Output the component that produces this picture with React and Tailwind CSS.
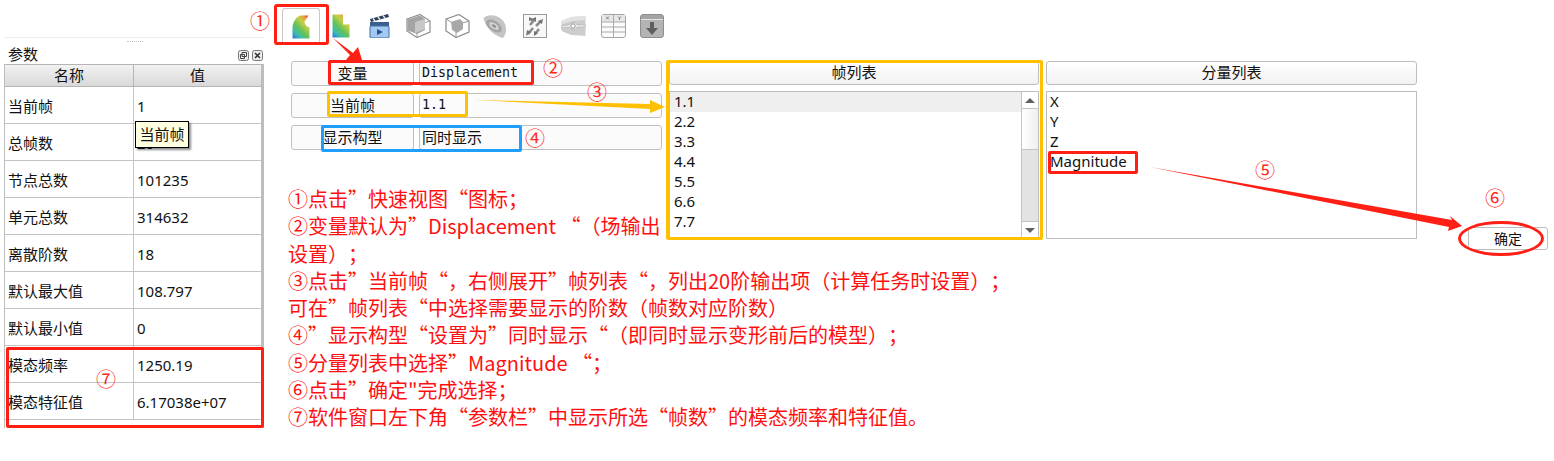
import React from 'react';

const cjk = "font-['Noto_Sans','Noto_Sans_CJK_SC',sans-serif]";

const params = [
    ['当前帧', '1'],
    ['总帧数', '20'],
    ['节点总数', '101235'],
    ['单元总数', '314632'],
    ['离散阶数', '18'],
    ['默认最大值', '108.797'],
    ['默认最小值', '0'],
    ['模态频率', '1250.19'],
    ['模态特征值', '6.17038e+07'],
];

const frames = ['1.1', '2.2', '3.3', '4.4', '5.5', '6.6', '7.7', '8.8'];
const components = ['X', 'Y', 'Z', 'Magnitude'];

const notes = [
    '①点击”快速视图“图标；',
    '②变量默认为”Displacement “（场输出',
    '设置）；',
    '③点击”当前帧“，右侧展开”帧列表“，列出20阶输出项（计算任务时设置）；',
    '可在”帧列表“中选择需要显示的阶数（帧数对应阶数）',
    '④”显示构型“设置为”同时显示“（即同时显示变形前后的模型）；',
    '⑤分量列表中选择”Magnitude “；',
    '⑥点击”确定"完成选择；',
    '⑦软件窗口左下角“参数栏”中显示所选“帧数”的模态频率和特征值。',
];

function Rainbow({ id }) {
    return (
        <defs>
            <linearGradient id={id} x1="0.05" y1="1" x2="0.8" y2="0">
                <stop offset="0" stopColor="#2a78d8" />
                <stop offset="0.22" stopColor="#3cbcae" />
                <stop offset="0.45" stopColor="#63c258" />
                <stop offset="0.72" stopColor="#c6cf46" />
                <stop offset="0.9" stopColor="#e8a040" />
                <stop offset="1" stopColor="#e4573a" />
            </linearGradient>
        </defs>
    );
}

function IconContourA() {
    return (
        <svg width="18" height="24" viewBox="0 0 18 24">
            <Rainbow id="rainbowA" />
            <path d="M0.5 23.5V12C1.5 6 4 1.5 9 0.5H16.5L12.5 6.5C12.5 9 14 11.5 17.5 12.5V23.5Z" fill="url(#rainbowA)" />
        </svg>
    );
}

function IconContourB() {
    return (
        <svg width="18" height="24" viewBox="0 0 18 24">
            <Rainbow id="rainbowB" />
            <path d="M0.5 0.5H11V10.5H17.5V23.5H0.5Z" fill="url(#rainbowB)" />
        </svg>
    );
}

function IconClapper() {
    return (
        <svg width="21" height="24" viewBox="0 0 21 24">
            <path d="M1 5L19 0L20 3L2 8Z" fill="#2f3f58" />
            <path d="M4 4.5L6 7M9 3L11 5.5M14 1.5L16 4" stroke="#e8eef8" strokeWidth="1.4" />
            <rect x="1" y="8" width="19" height="4" fill="#3a5f8e" />
            <rect x="1" y="12" width="19" height="12" rx="1" fill="#a4c8f0" stroke="#3f6ea5" />
            <path d="M8 15L14 18L8 21Z" fill="#1f5596" />
        </svg>
    );
}

function IconCubeSolid() {
    return (
        <svg width="25" height="24" viewBox="0 0 25 24">
            <path d="M1 5L14 0.5L24 7V18L11 23.5L1 17Z" fill="#ffffff" stroke="#8e8e8e" strokeWidth="1.2" />
            <path d="M1 5L11 11L24 7M11 11V23.5" fill="none" stroke="#a0a0a0" />
            <path d="M1.5 5.5L14 1.5L19 5V16L11 20L1.5 16.5Z" fill="#a4a4a4" />
            <path d="M9 8L19 5V15L9 19Z" fill="#c8c8c8" />
        </svg>
    );
}

function IconCubeWire() {
    return (
        <svg width="25" height="24" viewBox="0 0 25 24">
            <path d="M1 5L14 0.5L24 7V18L11 23.5L1 17Z" fill="#ffffff" stroke="#8a8a8a" strokeWidth="1.2" />
            <path d="M1 5L11 11L24 7M11 11V23.5" fill="none" stroke="#9a9a9a" />
            <path d="M6 8L15 5L18 8V15L12 19L7 16Z" fill="#a8a8a8" />
        </svg>
    );
}

function IconDome() {
    return (
        <svg width="24" height="24" viewBox="0 0 24 24">
            <path d="M0.5 4C6 -1 18 1 22 10C24 15 23 21 20 24C11 22 2 13 0.5 4Z" fill="#c4c4c4" />
            <ellipse cx="11" cy="12" rx="9" ry="5" transform="rotate(35 11 12)" fill="#a4a4a4" />
            <ellipse cx="11" cy="12" rx="5.5" ry="2.8" transform="rotate(35 11 12)" fill="#d2d2d2" />
            <ellipse cx="11" cy="12" rx="2.5" ry="1.2" transform="rotate(35 11 12)" fill="#8e8e8e" />
        </svg>
    );
}

function IconArrows() {
    return (
        <svg width="24" height="24" viewBox="0 0 24 24">
            <rect x="0.5" y="0.5" width="23" height="23" fill="#f8f8f8" stroke="#9a9a9a" />
            <path d="M7 11L12 5M13 12L18 7M5 20L10 14M12 20L16 15M10 8L8 5" stroke="#8c8c8c" strokeWidth="2.6" />
            <path d="M13 3L13 8L9 5ZM20 5L19 10L15 7ZM3 22L4 16L8 18ZM11 22L11 17L15 19ZM6 3L10 5L6 7Z" fill="#747474" />
        </svg>
    );
}

function IconMesh() {
    return (
        <svg width="25" height="24" viewBox="0 0 25 24">
            <path d="M0.5 7L10 3L24.5 2V22L10 21L0.5 17Z" fill="#cdcdcd" />
            <path d="M0.5 7L10 3L24.5 2V6L11 7L0.5 10Z" fill="#e2e2e2" />
            <path d="M0.5 12L8 11C10 8 15 8 16 11H24.5V13H16C15 16 10 16 8 13L0.5 14Z" fill="#f4f4f4" stroke="#a8a8a8" strokeWidth="0.6" />
            <circle cx="12" cy="12" r="2.2" fill="#ffffff" stroke="#8c8c8c" />
        </svg>
    );
}

function IconTable() {
    return (
        <svg width="25" height="24" viewBox="0 0 25 24">
            <rect x="0.5" y="0.5" width="24" height="23" rx="2.5" fill="#fbfbfb" stroke="#a3a3a3" />
            <rect x="1" y="1" width="23" height="7" fill="#e8e8e8" />
            <path d="M0.5 8H24.5M0.5 13H24.5M0.5 18H24.5M12.5 0.5V23.5" stroke="#a8a8a8" />
            <path d="M5 2.5L8 5.5M8 2.5L5 5.5M17 2.5L18.5 4L20 2.5M18.5 4V6" stroke="#666666" strokeWidth="0.8" fill="none" />
        </svg>
    );
}

function IconDownload() {
    return (
        <svg width="24" height="24" viewBox="0 0 24 24">
            <rect x="0.5" y="0.5" width="23" height="23" rx="2.5" fill="#b4b4b4" stroke="#8f8f8f" />
            <rect x="1" y="1" width="22" height="4" fill="#a4a4a4" />
            <path d="M1 5.5H23" stroke="#e6e6e6" />
            <path d="M10 8H14V14H18L12 21L6 14H10Z" fill="#5f5f5f" />
        </svg>
    );
}

const tools = [
    { Icon: IconContourB, className: 'ml-0' },
    { Icon: IconClapper, className: 'ml-[19px]' },
    { Icon: IconCubeSolid, className: 'ml-[16px]' },
    { Icon: IconCubeWire, className: 'ml-[14px]' },
    { Icon: IconDome, className: 'ml-[13px]' },
    { Icon: IconArrows, className: 'ml-[16px]' },
    { Icon: IconMesh, className: 'ml-[14px]' },
    { Icon: IconTable, className: 'ml-[15px]' },
    { Icon: IconDownload, className: 'ml-[14px]' },
];

function ParamPanel() {
    return (
        <div className="w-[260px] ml-1 mt-[37px]">
            <div className="h-[27px] border-t border-[#eeeeee] relative">
                <div className="absolute left-[123px] top-[3px] w-4 border-t border-dotted border-[#c4c4c4]" />
                <div className="flex items-end justify-between h-full pl-1 pr-[1px]">
                    <span className="text-[15px] leading-[20px] text-[#111]">参数</span>
                    <div className="flex gap-[3px] mb-[3px]">
                        <svg width="11" height="11" viewBox="0 0 11 11">
                            <rect x="0.5" y="0.5" width="10" height="10" rx="2" fill="#eee" stroke="#777" />
                            <path d="M4 2.5H8.5V6.5H4ZM2.5 4.5H6.5V8.5H2.5Z" fill="none" stroke="#444" />
                        </svg>
                        <svg width="11" height="11" viewBox="0 0 11 11">
                            <rect x="0.5" y="0.5" width="10" height="10" rx="2" fill="#eee" stroke="#777" />
                            <path d="M3 3L8 8M8 3L3 8" stroke="#333" strokeWidth="1.6" />
                        </svg>
                    </div>
                </div>
            </div>
            <div className="border-l border-r-[3px] border-[#bdbdbd] h-[364px]">
                <div className="flex h-[23px] border-y border-[#b5b5b5] bg-linear-to-b from-[#f2f2f2] to-[#d9d9d9] text-[15px] leading-[21px] text-[#111] text-center">
                    <div className="w-[129px] border-r border-[#b5b5b5]">名称</div>
                    <div className="flex-1">值</div>
                </div>
                {params.map(([name, value]) => (
                    <div key={name} className="flex h-[37px] border-b border-[#c4c4c4] text-[15px] leading-[38px] text-[#111]">
                        <div className="w-[129px] pl-[3px] border-r border-[#c4c4c4]">{name}</div>
                        <div className="flex-1 pl-[3px]">{value}</div>
                    </div>
                ))}
            </div>
        </div>
    );
}

function FieldRow({ label, value, mono }) {
    return (
        <div className="flex h-[25px] gap-[5px] text-[15px] text-[#111]">
            <div className="w-[123px] rounded-[3px] border border-[#c0c0c0] bg-[#fbfbfb] text-center leading-[22px]">{label}</div>
            <div className={`flex-1 rounded-[3px] border border-[#c0c0c0] bg-[#fbfbfb] pl-[2px] leading-[22px] ${mono ? "font-['DejaVu_Sans_Mono',monospace] text-[13.3px]" : ''}`}>{value}</div>
        </div>
    );
}

function ListHeader({ children }) {
    return (
        <div className="h-[24px] rounded-[3px] border border-[#bdbdbd] bg-linear-to-b from-white to-[#f2f2f2] text-center text-[15px] leading-[21px] text-[#111]">
            {children}
        </div>
    );
}

function FrameList() {
    return (
        <div className="w-[370px]">
            <ListHeader>帧列表</ListHeader>
            <div className="mt-[6px] h-[148px] border border-[#bdbdbd] flex overflow-hidden">
                <div className="flex-1 text-[15px] leading-[18px] text-[#111]">
                    {frames.map((frame, i) => (
                        <div key={frame} className={`h-5 pl-1 ${i === 0 ? 'bg-[#efefef]' : ''}`}>{frame}</div>
                    ))}
                </div>
                <div className="w-[17px] border-l border-[#c4c4c4] flex flex-col">
                    <div className="h-[17px] border-b border-[#c4c4c4] flex items-center justify-center bg-white">
                        <div className="border-x-[5px] border-b-[5px] border-x-transparent border-b-[#606060]" />
                    </div>
                    <div className="h-10 bg-linear-to-r from-white to-[#efefef]" />
                    <div className="flex-1 bg-[#e3e3e3] border-t border-[#c4c4c4]" />
                    <div className="h-[17px] border-t border-[#c4c4c4] flex items-center justify-center bg-white">
                        <div className="border-x-[5px] border-t-[5px] border-x-transparent border-t-[#606060]" />
                    </div>
                </div>
            </div>
        </div>
    );
}

function ComponentList() {
    return (
        <div className="w-[371px]">
            <ListHeader>分量列表</ListHeader>
            <div className="mt-[6px] h-[148px] border border-[#bdbdbd] pl-[3px] text-[15px] leading-[18px] text-[#111]">
                {components.map((item) => (
                    <div key={item} className="h-5">{item}</div>
                ))}
            </div>
        </div>
    );
}

function Annotations() {
    const circled = "absolute text-[20px] leading-none text-[#ff2a1a] font-['Noto_Sans_CJK_SC',sans-serif]";
    return (
        <>
            <div className="absolute left-[274px] top-[4px] w-[55px] h-[41px] rounded-[3px] border-[3px] border-[#ff1f14]" />
            <div className="absolute left-[328px] top-[60px] w-[206px] h-[25px] rounded-[2px] border-[3px] border-[#ff1f14]" />
            <div className="absolute left-[327px] top-[91px] w-[141px] h-[26px] rounded-[2px] border-[3px] border-[#ffc000]" />
            <div className="absolute left-[321px] top-[125px] w-[201px] h-[27px] rounded-[2px] border-[3px] border-[#1e9fff]" />
            <div className="absolute left-[666px] top-[60px] w-[377px] h-[180px] rounded-[2px] border-[3px] border-[#ffc000]" />
            <div className="absolute left-[1048px] top-[151px] w-[90px] h-[23px] rounded-[2px] border-[3px] border-[#ff1f14]" />
            <div className="absolute left-[6px] top-[347px] w-[258px] h-[81px] rounded-[2px] border-[3px] border-[#ff1f14]" />
            <div className="absolute left-[1458px] top-[221px] w-[86px] h-[35px] rounded-[50%] border-[3px] border-[#ff1f14]" />

            <svg className="absolute left-0 top-0 pointer-events-none" width="1554" height="461" viewBox="0 0 1554 461">
                <path d="M333 38L353 53L358 47L362 60L346 60L350 55Z" fill="#ff1f14" />
                <path d="M474 100L650 104L650 100L665 107L650 113L650 109Z" fill="#ffc000" />
                <path d="M1150 167L1452 220L1450 216L1462 226L1448 231L1449 227Z" fill="#ff1f14" />
            </svg>

            <span className={`${circled} left-[250px] top-[11px]`}>①</span>
            <span className={`${circled} left-[543px] top-[58px]`}>②</span>
            <span className={`${circled} left-[587px] top-[82px]`}>③</span>
            <span className={`${circled} left-[525px] top-[128px]`}>④</span>
            <span className={`${circled} left-[1255px] top-[160px]`}>⑤</span>
            <span className={`${circled} left-[1485px] top-[188px]`}>⑥</span>
            <span className={`${circled} left-[96px] top-[369px]`}>⑦</span>

            <div className="absolute left-[135px] top-[121px] w-[54px] h-[27px] border border-black bg-[#ffffe1] text-[15px] leading-[24px] text-center text-[#111] shadow-[2px_2px_2px_rgba(0,0,0,0.45)]">
                当前帧
            </div>
        </>
    );
}

function App() {
    return (
        <div className={`relative w-[1554px] h-[461px] overflow-hidden bg-white flex ${cjk}`}>
            <ParamPanel />

            <div className="ml-[27px] flex-1">
                <div className="flex items-center h-[36px] mt-2 ml-[-9px]">
                    <div className="w-[38px] h-[36px] rounded-[3px] border border-[#c9c9c9] border-b-0 flex items-center justify-center">
                        <IconContourA />
                    </div>
                    <div className="flex ml-[12px]">
                        {tools.map(({ Icon, className }, i) => (
                            <div key={i} className={`flex items-center ${className}`}>
                                <Icon />
                            </div>
                        ))}
                    </div>
                </div>

                <div className="flex mt-[17px] gap-[7px]">
                    <div className="w-[371px] flex flex-col gap-[7px]">
                        <FieldRow label="变量" value="Displacement" mono />
                        <FieldRow label="当前帧" value="1.1" mono />
                        <FieldRow label="显示构型" value="同时显示" />

                        <div className="mt-[28px] ml-[-3px] w-[760px] whitespace-nowrap text-[20px] leading-[27.3px] text-[#ff1010] font-['Noto_Sans_CJK_SC',sans-serif] [text-spacing-trim:space-all]">
                            {notes.map((line) => (
                                <div key={line}>{line}</div>
                            ))}
                        </div>
                    </div>
                    <FrameList />
                    <ComponentList />
                    <div className="self-start mt-[166px] ml-[44px] w-[80px] h-[23px] rounded-[3px] border border-[#bdbdbd] bg-white text-center text-[14px] leading-[21px] text-[#111]">
                        确定
                    </div>
                </div>
            </div>

            <Annotations />
        </div>
    );
}

export default App;
